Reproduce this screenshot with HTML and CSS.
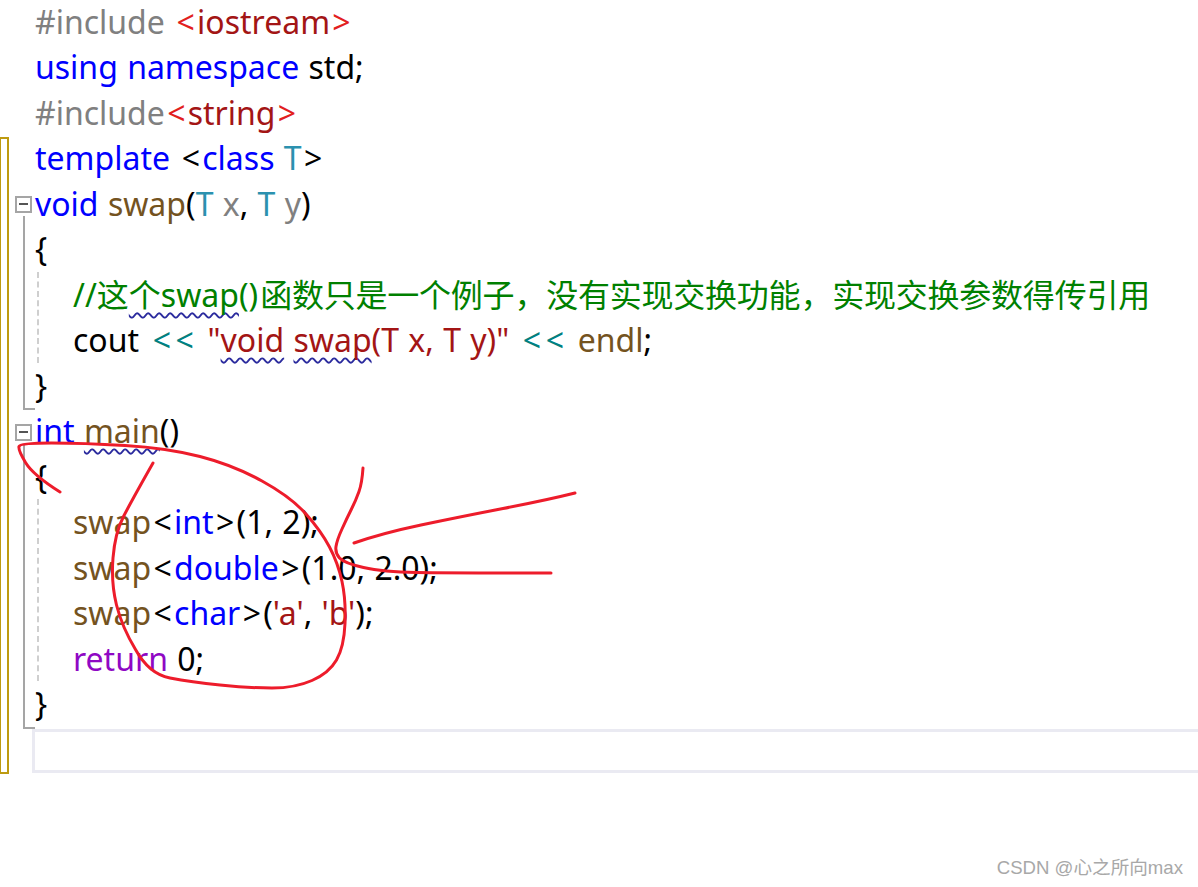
FILE: index.html
```html
<!DOCTYPE html>
<html lang="zh">
<head>
<meta charset="utf-8">
<title>swap</title>
<link rel="stylesheet" href="styles.css">
</head>
<body>
<main class="editor">
  <div class="change-bar"></div>
  <div class="fold f1"><span class="box"></span></div>
  <div class="fold f2"><span class="box"></span></div>
  <div class="guide g1"></div>
  <div class="guide g2"></div>
  <div class="code">
    <div class="ln"><span class="pp">#include </span><span class="ang lt">&lt;</span><span class="str">iostream</span><span class="ang lt">&gt;</span></div>
    <div class="ln"><span class="kw">using namespace</span> std;</div>
    <div class="ln"><span class="pp">#include</span><span class="ang lt">&lt;</span><span class="str">string</span><span class="ang lt">&gt;</span></div>
    <div class="ln"><span class="kw">template</span> <span class="lt">&lt;</span><span class="kw">class</span> <span class="ty">T</span><span class="lt">&gt;</span></div>
    <div class="ln"><span class="kw">void</span> <span class="fn">swap</span>(<span class="ty">T</span> <span class="pa">x</span>, <span class="ty">T</span> <span class="pa">y</span>)</div>
    <div class="ln">{</div>
    <div class="block">
      <div class="ln"><span class="cm">//这<span class="sq">个swap</span>()<span class="rest">函数只是一个例子，没有实现交换功能，实现交换参数得传引用</span></span></div>
      <div class="ln">cout <span class="op"><span class="lt">&lt;</span><span class="lt">&lt;</span></span> <span class="str">"<span class="sq">void</span> <span class="sq">swap</span>(T x, T y)"</span> <span class="op"><span class="lt">&lt;</span><span class="lt">&lt;</span></span> <span class="fn">endl</span>;</div>
    </div>
    <div class="ln">}</div>
    <div class="ln"><span class="kw">int</span> <span class="fn sq">main</span>()</div>
    <div class="ln">{</div>
    <div class="block">
      <div class="ln"><span class="fn">swap</span><span class="lt">&lt;</span><span class="kw">int</span><span class="lt">&gt;</span>(1, 2);</div>
      <div class="ln"><span class="fn">swap</span><span class="lt">&lt;</span><span class="kw">double</span><span class="lt">&gt;</span>(1.0, 2.0);</div>
      <div class="ln"><span class="fn">swap</span><span class="lt">&lt;</span><span class="kw">char</span><span class="lt">&gt;</span>(<span class="str">'a'</span>, <span class="str">'b'</span>);</div>
      <div class="ln"><span class="ret">return</span> 0;</div>
    </div>
    <div class="ln">}</div>
    <div class="current"></div>
  </div>
  <svg class="ink" width="1198" height="887" viewBox="0 0 1198 887" fill="none" stroke="#ed1c2b" stroke-width="3" stroke-linecap="round" stroke-linejoin="round">
    <path d="M60 492Q33 475 25.5 462.5Q18 450 19 446.5Q20 443 51.5 443Q83 443 125 445.5Q167 448 200 456.5Q233 465 262 481Q291 497 306 514Q321 531 329.5 547Q338 563 342 581.5Q346 600 345 623.5Q344 647 336.5 660Q329 673 312 680.5Q295 688 272 688Q249 688 220 685Q191 682 170 678Q149 674 135.5 649.5Q122 627 116.5 605Q111 583 113 558Q115 533 123.5 516.5Q132 500 153 463"/>
    <path d="M363 468Q362 483 359 491.5Q356 500 351.5 509Q347 518 342 529Q337 540 336 546.5Q335 553 339.5 558Q344 563 363.5 567.5Q383 572 416.5 572.5Q450 573 551 573"/>
    <path d="M354 543Q383 533 421 525Q459 517 503 508.5Q547 500 575 493"/>
  </svg>
  <footer class="mark">CSDN @心之所向max</footer>
</main>
</body>
</html>
```
FILE: styles.css
```css
html, body {
  margin: 0;
  padding: 0;
  background: #fff;
}
.editor {
  position: relative;
  width: 1198px;
  height: 887px;
  overflow: hidden;
}
.code {
  padding: 0 0 0 35px;
  font: 32px/45.47px "Noto Sans", "Noto Sans CJK SC", sans-serif;
  word-spacing: 1px;
  color: #000;
  margin-top: -1px;
}
.ln {
  height: 45.47px;
  white-space: pre;
}
.block {
  margin-left: 2px;
  padding-left: 34px;
  border-left: 2px dashed #cfcfcf;
  box-sizing: border-box;
}
.lt {
  margin: 0 2.3px;
}
.kw { color: #0000ff; }
.pp { color: #808080; }
.ang { color: #e21f1f; }
.str { color: #a31515; }
.ty { color: #2b91af; }
.fn { color: #74531f; }
.pa { color: #808080; }
.cm {
  color: #008000;
}
.rest {
  margin-left: 2px;
  letter-spacing: -0.22px;
}
.op {
  color: #008080;
  margin: 0 2px;
}
.ret { color: #8f08c4; }
.sq {
  text-decoration: underline wavy #2b2b9e 1.5px;
  text-decoration-skip-ink: none;
  text-underline-offset: 5px;
}
.current {
  box-sizing: border-box;
  height: 44px;
  margin: 2.5px 0 0 -3px;
  border: 3px solid #eaeaf2;
  border-right: 0;
}
.change-bar {
  position: absolute;
  left: 0;
  top: 137px;
  width: 9px;
  height: 637px;
  box-sizing: border-box;
  border: 1px solid #bd9a10;
  border-width: 2px 2px 2px 1px;
}
.fold {
  position: absolute;
  left: 15px;
}
.f1 { top: 196px; }
.f2 { top: 424px; }
.box {
  display: block;
  position: relative;
  width: 17px;
  height: 17px;
  box-sizing: border-box;
  border: 2px solid #a5a5a5;
}
.box::after {
  content: "";
  position: absolute;
  left: 2px;
  right: 2px;
  top: 5px;
  height: 2px;
  background: #555;
}
.guide {
  position: absolute;
  left: 23px;
  width: 10px;
  border-left: 2px solid #a5a5a5;
  border-bottom: 2px solid #a5a5a5;
}
.g1 { top: 216px; height: 192px; }
.g2 { top: 444px; height: 283px; }
.ink {
  position: absolute;
  left: 0;
  top: 0;
}
.mark {
  position: absolute;
  right: 15px;
  top: 856px;
  font: 18.6px/24px "Liberation Sans", "Noto Sans CJK SC", sans-serif;
  word-spacing: normal;
  color: #a8a8a8;
}
```
